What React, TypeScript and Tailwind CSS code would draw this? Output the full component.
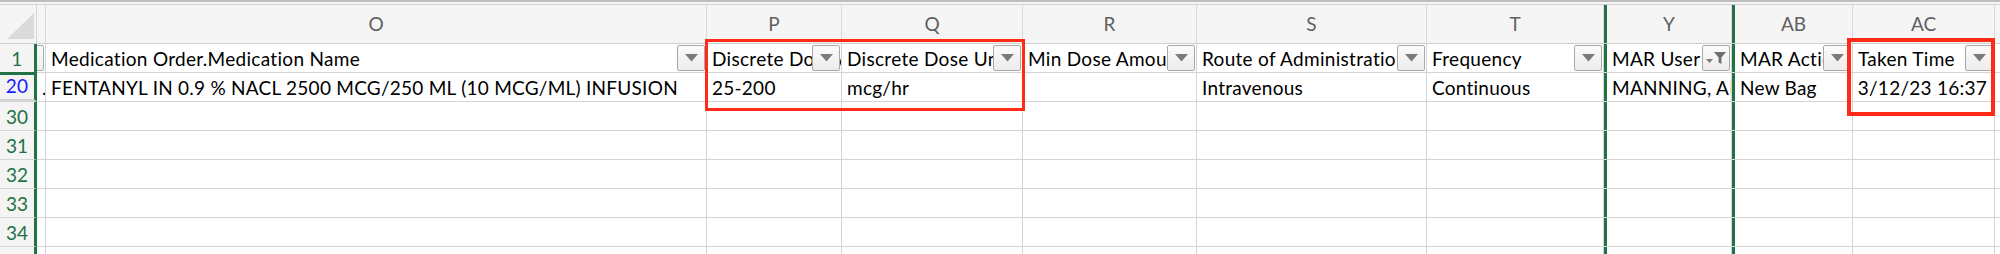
const FONT = "font-['Lato',sans-serif]";

type Col = {
  key: string;
  width: string;
  letter: string;
  head?: string;
  value?: string;
  right?: boolean;
  filtered?: boolean;
  edge?: string;
};

const COLS: Col[] = [
  { key: 'N', width: 'w-[9px]', letter: '', head: '', value: '.' },
  { key: 'O', width: 'w-[661px]', letter: 'O', head: 'Medication Order.Medication Name', value: 'FENTANYL IN 0.9 % NACL 2500 MCG/250 ML (10 MCG/ML) INFUSION' },
  { key: 'P', width: 'w-[135px]', letter: 'P', head: 'Discrete Dose Amount', value: '25-200' },
  { key: 'Q', width: 'w-[181px]', letter: 'Q', head: 'Discrete Dose Unit', value: 'mcg/hr' },
  { key: 'R', width: 'w-[174px]', letter: 'R', head: 'Min Dose Amount', value: '' },
  { key: 'S', width: 'w-[230px]', letter: 'S', head: 'Route of Administration', value: 'Intravenous' },
  { key: 'T', width: 'w-[177px]', letter: 'T', head: 'Frequency', value: 'Continuous' },
  { key: 'Y', width: 'w-[128px]', letter: 'Y', head: 'MAR User', value: 'MANNING, AMANDA', filtered: true, edge: 'border-l-[3px] border-l-[#217346]' },
  { key: 'AB', width: 'w-[121px]', letter: 'AB', head: 'MAR Action', value: 'New Bag', edge: 'border-l-[3px] border-l-[#217346]' },
  { key: 'AC', width: 'w-[142px]', letter: 'AC', head: 'Taken Time', value: '3/12/23 16:37', right: true },
];

const EMPTY_ROWS = ['30', '31', '32', '33', '34', '35'];

function FilterButton({ active }: { active?: boolean }) {
  return (
    <div className="absolute right-[1px] top-[1px] w-[28px] h-[26px] border border-[#a9a9a9] rounded-[2px] bg-gradient-to-b from-[#fbfbfb] to-[#ececec] flex items-center justify-center">
      {active ? (
        <svg width="22" height="14" viewBox="0 0 22 14">
          <path d="M1 8h7l-3.5 4z" fill="#7b7b7b" />
          <path d="M9 1h12l-4.6 5.6V13l-2.8-1.6V6.6z" fill="#6f6f6f" />
        </svg>
      ) : (
        <svg width="13" height="8" viewBox="0 0 13 8">
          <path d="M0 0h13L6.5 7.5z" fill="#7b7b7b" />
        </svg>
      )}
    </div>
  );
}

function RowHead({ label, blue, tall }: { label: string; blue?: boolean; tall?: boolean }) {
  return (
    <div
      className={`w-[37px] h-[29px] shrink-0 bg-[#f4f4f4] border-r-[3px] border-r-[#217346] border-b border-b-[#d4d4d4] flex items-end justify-center pb-[1px] text-[19px] leading-[24px] ${
        blue ? 'text-[#1a1aff]' : 'text-[#1f7244]'
      } ${tall ? 'border-b-[3px] border-b-[#217346]' : ''}`}
    >
      {label}
    </div>
  );
}

function Cell({ col, children, right }: { col: Col; children?: React.ReactNode; right?: boolean }) {
  return (
    <div
      className={`relative ${col.width} h-full shrink-0 overflow-hidden border-r border-r-[#d4d4d4] ${col.edge ?? ''} flex items-end ${
        right ? 'justify-end pr-[7px]' : 'pl-[5px]'
      } pb-[2px]`}
    >
      {children}
    </div>
  );
}

export default function App() {
  return (
    <div className={`relative w-[2000px] h-[254px] overflow-hidden bg-white text-black ${FONT}`}>
      {/* top chrome */}
      <div className="h-[5px] bg-[#f6f6f6] border-t-2 border-t-[#bdbdbd] border-b border-b-[#d0d0d0]" />

      {/* column letters */}
      <div className="flex h-[39px] bg-[#f5f5f5] border-b border-b-[#cfcfcf]">
        <div className="relative w-[37px] shrink-0 border-r border-r-[#d4d4d4]">
          <svg className="absolute left-[7px] top-[8px]" width="27" height="26" viewBox="0 0 27 26">
            <path d="M27 0V26H0z" fill="#dadada" />
          </svg>
        </div>
        {COLS.map(c => (
          <div
            key={c.key}
            className={`${c.width} shrink-0 border-r border-r-[#d9d9d9] ${c.edge ?? ''} flex items-center justify-center text-[19px] text-[#606060]`}
          >
            {c.letter}
          </div>
        ))}
        <div className="flex-1" />
      </div>

      {/* header row 1 */}
      <div className="flex h-[29px] border-b border-b-[#d4d4d4] text-[19px] leading-[22px] tracking-[0.3px]">
        <RowHead label="1" />
        {COLS.map(c => (
          <Cell key={c.key} col={c}>
            <span className="whitespace-nowrap">{c.head}</span>
            <FilterButton active={c.filtered} />
          </Cell>
        ))}
        <div className="flex-1" />
      </div>

      {/* data row 20 */}
      <div className="flex h-[29px] border-b border-b-[#d4d4d4] text-[19px] leading-[22px] tracking-[0.25px]">
        <RowHead label="20" blue tall />
        {COLS.map(c => (
          <Cell key={c.key} col={c} right={c.right}>
            <span className="whitespace-nowrap">{c.value}</span>
          </Cell>
        ))}
        <div className="flex-1" />
      </div>

      {EMPTY_ROWS.map(r => (
        <div key={r} className="flex h-[29px] border-b border-b-[#d4d4d4]">
          <RowHead label={r} />
          {COLS.map(c => (
            <Cell key={c.key} col={c} />
          ))}
          <div className="flex-1" />
        </div>
      ))}

      {/* hidden-row marker above row 20 */}
      <div className="absolute left-0 top-[72px] w-[37px] h-[3px] bg-[#217346]" />

      {/* highlight boxes */}
      <div className="absolute left-[705px] top-[39px] w-[320px] h-[72px] border-[3px] border-[#ff2a17]" />
      <div className="absolute left-[1847px] top-[38px] w-[148px] h-[78px] border-4 border-[#ff2a17]" />
    </div>
  );
}
